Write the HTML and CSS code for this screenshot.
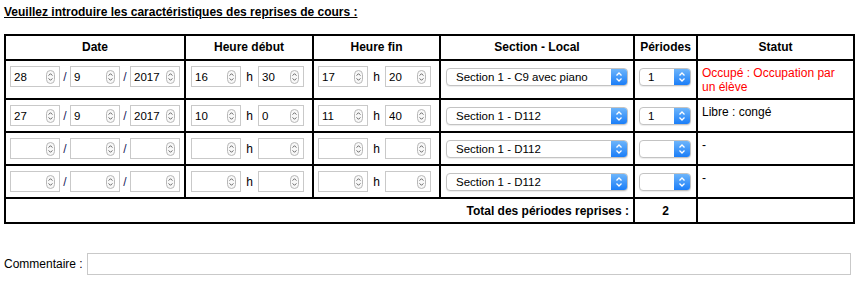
FILE: index.html
```html
<!DOCTYPE html>
<html lang="fr">
<head>
  <meta charset="UTF-8" />
  <title>Reprises de cours</title>
  <link rel="stylesheet" href="styles.css">
</head>
<body>
  <p class="title">Veuillez introduire les caractéristiques des reprises de cours :</p>

  <table class="reprises">
    <colgroup>
      <col class="c-date">
      <col class="c-debut">
      <col class="c-fin">
      <col class="c-local">
      <col class="c-periodes">
      <col class="c-statut">
    </colgroup>
    <tr>
      <th>Date</th>
      <th>Heure début</th>
      <th>Heure fin</th>
      <th>Section - Local</th>
      <th>Périodes</th>
      <th>Statut</th>
    </tr>

    <tr>
      <td>
        <div class="line">
          <span class="num"><input type="text" value="28"><svg class="spin" viewBox="0 0 9 14" width="9" height="14"><rect x="0.5" y="0.5" width="8" height="13" rx="4" fill="#f8f8f8" stroke="#b8b8b8"/><path d="M2.6 5.6L4.5 3.7 6.4 5.6M2.6 8.4L4.5 10.3 6.4 8.4" fill="none" stroke="#555" stroke-width="0.9"/></svg></span>
          <span class="sep">/</span>
          <span class="num"><input type="text" value="9"><svg class="spin" viewBox="0 0 9 14" width="9" height="14"><rect x="0.5" y="0.5" width="8" height="13" rx="4" fill="#f8f8f8" stroke="#b8b8b8"/><path d="M2.6 5.6L4.5 3.7 6.4 5.6M2.6 8.4L4.5 10.3 6.4 8.4" fill="none" stroke="#555" stroke-width="0.9"/></svg></span>
          <span class="sep">/</span>
          <span class="num"><input type="text" value="2017"><svg class="spin" viewBox="0 0 9 14" width="9" height="14"><rect x="0.5" y="0.5" width="8" height="13" rx="4" fill="#f8f8f8" stroke="#b8b8b8"/><path d="M2.6 5.6L4.5 3.7 6.4 5.6M2.6 8.4L4.5 10.3 6.4 8.4" fill="none" stroke="#555" stroke-width="0.9"/></svg></span>
        </div>
      </td>
      <td>
        <div class="line shift">
          <span class="num"><input type="text" value="16"><svg class="spin" viewBox="0 0 9 14" width="9" height="14"><rect x="0.5" y="0.5" width="8" height="13" rx="4" fill="#f8f8f8" stroke="#b8b8b8"/><path d="M2.6 5.6L4.5 3.7 6.4 5.6M2.6 8.4L4.5 10.3 6.4 8.4" fill="none" stroke="#555" stroke-width="0.9"/></svg></span>
          <span class="sep sep-h">h</span>
          <span class="num narrow"><input type="text" value="30"><svg class="spin" viewBox="0 0 9 14" width="9" height="14"><rect x="0.5" y="0.5" width="8" height="13" rx="4" fill="#f8f8f8" stroke="#b8b8b8"/><path d="M2.6 5.6L4.5 3.7 6.4 5.6M2.6 8.4L4.5 10.3 6.4 8.4" fill="none" stroke="#555" stroke-width="0.9"/></svg></span>
        </div>
      </td>
      <td>
        <div class="line">
          <span class="num"><input type="text" value="17"><svg class="spin" viewBox="0 0 9 14" width="9" height="14"><rect x="0.5" y="0.5" width="8" height="13" rx="4" fill="#f8f8f8" stroke="#b8b8b8"/><path d="M2.6 5.6L4.5 3.7 6.4 5.6M2.6 8.4L4.5 10.3 6.4 8.4" fill="none" stroke="#555" stroke-width="0.9"/></svg></span>
          <span class="sep sep-h">h</span>
          <span class="num narrow"><input type="text" value="20"><svg class="spin" viewBox="0 0 9 14" width="9" height="14"><rect x="0.5" y="0.5" width="8" height="13" rx="4" fill="#f8f8f8" stroke="#b8b8b8"/><path d="M2.6 5.6L4.5 3.7 6.4 5.6M2.6 8.4L4.5 10.3 6.4 8.4" fill="none" stroke="#555" stroke-width="0.9"/></svg></span>
        </div>
      </td>
      <td>
        <div class="line shift">
          <span class="select select-local"><select><option>Section 1 - C9 avec piano</option></select><span class="arrow"><svg viewBox="0 0 8 12" width="8" height="12"><path d="M1.5 4.5L4 2 6.5 4.5M1.5 7.5L4 10 6.5 7.5" fill="none" stroke="#fff" stroke-width="1.3"/></svg></span></span>
        </div>
      </td>
      <td>
        <div class="line">
          <span class="select select-per"><select><option>1</option></select><span class="arrow"><svg viewBox="0 0 8 12" width="8" height="12"><path d="M1.5 4.5L4 2 6.5 4.5M1.5 7.5L4 10 6.5 7.5" fill="none" stroke="#fff" stroke-width="1.3"/></svg></span></span>
        </div>
      </td>
      <td class="statut busy">Occupé : Occupation par un élève</td>
    </tr>

    <tr>
      <td>
        <div class="line">
          <span class="num"><input type="text" value="27"><svg class="spin" viewBox="0 0 9 14" width="9" height="14"><rect x="0.5" y="0.5" width="8" height="13" rx="4" fill="#f8f8f8" stroke="#b8b8b8"/><path d="M2.6 5.6L4.5 3.7 6.4 5.6M2.6 8.4L4.5 10.3 6.4 8.4" fill="none" stroke="#555" stroke-width="0.9"/></svg></span>
          <span class="sep">/</span>
          <span class="num"><input type="text" value="9"><svg class="spin" viewBox="0 0 9 14" width="9" height="14"><rect x="0.5" y="0.5" width="8" height="13" rx="4" fill="#f8f8f8" stroke="#b8b8b8"/><path d="M2.6 5.6L4.5 3.7 6.4 5.6M2.6 8.4L4.5 10.3 6.4 8.4" fill="none" stroke="#555" stroke-width="0.9"/></svg></span>
          <span class="sep">/</span>
          <span class="num"><input type="text" value="2017"><svg class="spin" viewBox="0 0 9 14" width="9" height="14"><rect x="0.5" y="0.5" width="8" height="13" rx="4" fill="#f8f8f8" stroke="#b8b8b8"/><path d="M2.6 5.6L4.5 3.7 6.4 5.6M2.6 8.4L4.5 10.3 6.4 8.4" fill="none" stroke="#555" stroke-width="0.9"/></svg></span>
        </div>
      </td>
      <td>
        <div class="line shift">
          <span class="num"><input type="text" value="10"><svg class="spin" viewBox="0 0 9 14" width="9" height="14"><rect x="0.5" y="0.5" width="8" height="13" rx="4" fill="#f8f8f8" stroke="#b8b8b8"/><path d="M2.6 5.6L4.5 3.7 6.4 5.6M2.6 8.4L4.5 10.3 6.4 8.4" fill="none" stroke="#555" stroke-width="0.9"/></svg></span>
          <span class="sep sep-h">h</span>
          <span class="num narrow"><input type="text" value="0"><svg class="spin" viewBox="0 0 9 14" width="9" height="14"><rect x="0.5" y="0.5" width="8" height="13" rx="4" fill="#f8f8f8" stroke="#b8b8b8"/><path d="M2.6 5.6L4.5 3.7 6.4 5.6M2.6 8.4L4.5 10.3 6.4 8.4" fill="none" stroke="#555" stroke-width="0.9"/></svg></span>
        </div>
      </td>
      <td>
        <div class="line">
          <span class="num"><input type="text" value="11"><svg class="spin" viewBox="0 0 9 14" width="9" height="14"><rect x="0.5" y="0.5" width="8" height="13" rx="4" fill="#f8f8f8" stroke="#b8b8b8"/><path d="M2.6 5.6L4.5 3.7 6.4 5.6M2.6 8.4L4.5 10.3 6.4 8.4" fill="none" stroke="#555" stroke-width="0.9"/></svg></span>
          <span class="sep sep-h">h</span>
          <span class="num narrow"><input type="text" value="40"><svg class="spin" viewBox="0 0 9 14" width="9" height="14"><rect x="0.5" y="0.5" width="8" height="13" rx="4" fill="#f8f8f8" stroke="#b8b8b8"/><path d="M2.6 5.6L4.5 3.7 6.4 5.6M2.6 8.4L4.5 10.3 6.4 8.4" fill="none" stroke="#555" stroke-width="0.9"/></svg></span>
        </div>
      </td>
      <td>
        <div class="line shift">
          <span class="select select-local"><select><option>Section 1 - D112</option></select><span class="arrow"><svg viewBox="0 0 8 12" width="8" height="12"><path d="M1.5 4.5L4 2 6.5 4.5M1.5 7.5L4 10 6.5 7.5" fill="none" stroke="#fff" stroke-width="1.3"/></svg></span></span>
        </div>
      </td>
      <td>
        <div class="line">
          <span class="select select-per"><select><option>1</option></select><span class="arrow"><svg viewBox="0 0 8 12" width="8" height="12"><path d="M1.5 4.5L4 2 6.5 4.5M1.5 7.5L4 10 6.5 7.5" fill="none" stroke="#fff" stroke-width="1.3"/></svg></span></span>
        </div>
      </td>
      <td class="statut">Libre : congé</td>
    </tr>

    <tr>
      <td>
        <div class="line">
          <span class="num"><input type="text"><svg class="spin" viewBox="0 0 9 14" width="9" height="14"><rect x="0.5" y="0.5" width="8" height="13" rx="4" fill="#f8f8f8" stroke="#b8b8b8"/><path d="M2.6 5.6L4.5 3.7 6.4 5.6M2.6 8.4L4.5 10.3 6.4 8.4" fill="none" stroke="#555" stroke-width="0.9"/></svg></span>
          <span class="sep">/</span>
          <span class="num"><input type="text"><svg class="spin" viewBox="0 0 9 14" width="9" height="14"><rect x="0.5" y="0.5" width="8" height="13" rx="4" fill="#f8f8f8" stroke="#b8b8b8"/><path d="M2.6 5.6L4.5 3.7 6.4 5.6M2.6 8.4L4.5 10.3 6.4 8.4" fill="none" stroke="#555" stroke-width="0.9"/></svg></span>
          <span class="sep">/</span>
          <span class="num"><input type="text"><svg class="spin" viewBox="0 0 9 14" width="9" height="14"><rect x="0.5" y="0.5" width="8" height="13" rx="4" fill="#f8f8f8" stroke="#b8b8b8"/><path d="M2.6 5.6L4.5 3.7 6.4 5.6M2.6 8.4L4.5 10.3 6.4 8.4" fill="none" stroke="#555" stroke-width="0.9"/></svg></span>
        </div>
      </td>
      <td>
        <div class="line shift">
          <span class="num"><input type="text"><svg class="spin" viewBox="0 0 9 14" width="9" height="14"><rect x="0.5" y="0.5" width="8" height="13" rx="4" fill="#f8f8f8" stroke="#b8b8b8"/><path d="M2.6 5.6L4.5 3.7 6.4 5.6M2.6 8.4L4.5 10.3 6.4 8.4" fill="none" stroke="#555" stroke-width="0.9"/></svg></span>
          <span class="sep sep-h">h</span>
          <span class="num narrow"><input type="text"><svg class="spin" viewBox="0 0 9 14" width="9" height="14"><rect x="0.5" y="0.5" width="8" height="13" rx="4" fill="#f8f8f8" stroke="#b8b8b8"/><path d="M2.6 5.6L4.5 3.7 6.4 5.6M2.6 8.4L4.5 10.3 6.4 8.4" fill="none" stroke="#555" stroke-width="0.9"/></svg></span>
        </div>
      </td>
      <td>
        <div class="line">
          <span class="num"><input type="text"><svg class="spin" viewBox="0 0 9 14" width="9" height="14"><rect x="0.5" y="0.5" width="8" height="13" rx="4" fill="#f8f8f8" stroke="#b8b8b8"/><path d="M2.6 5.6L4.5 3.7 6.4 5.6M2.6 8.4L4.5 10.3 6.4 8.4" fill="none" stroke="#555" stroke-width="0.9"/></svg></span>
          <span class="sep sep-h">h</span>
          <span class="num narrow"><input type="text"><svg class="spin" viewBox="0 0 9 14" width="9" height="14"><rect x="0.5" y="0.5" width="8" height="13" rx="4" fill="#f8f8f8" stroke="#b8b8b8"/><path d="M2.6 5.6L4.5 3.7 6.4 5.6M2.6 8.4L4.5 10.3 6.4 8.4" fill="none" stroke="#555" stroke-width="0.9"/></svg></span>
        </div>
      </td>
      <td>
        <div class="line shift">
          <span class="select select-local"><select><option>Section 1 - D112</option></select><span class="arrow"><svg viewBox="0 0 8 12" width="8" height="12"><path d="M1.5 4.5L4 2 6.5 4.5M1.5 7.5L4 10 6.5 7.5" fill="none" stroke="#fff" stroke-width="1.3"/></svg></span></span>
        </div>
      </td>
      <td>
        <div class="line">
          <span class="select select-per"><select><option></option></select><span class="arrow"><svg viewBox="0 0 8 12" width="8" height="12"><path d="M1.5 4.5L4 2 6.5 4.5M1.5 7.5L4 10 6.5 7.5" fill="none" stroke="#fff" stroke-width="1.3"/></svg></span></span>
        </div>
      </td>
      <td class="statut">-</td>
    </tr>

    <tr>
      <td>
        <div class="line">
          <span class="num"><input type="text"><svg class="spin" viewBox="0 0 9 14" width="9" height="14"><rect x="0.5" y="0.5" width="8" height="13" rx="4" fill="#f8f8f8" stroke="#b8b8b8"/><path d="M2.6 5.6L4.5 3.7 6.4 5.6M2.6 8.4L4.5 10.3 6.4 8.4" fill="none" stroke="#555" stroke-width="0.9"/></svg></span>
          <span class="sep">/</span>
          <span class="num"><input type="text"><svg class="spin" viewBox="0 0 9 14" width="9" height="14"><rect x="0.5" y="0.5" width="8" height="13" rx="4" fill="#f8f8f8" stroke="#b8b8b8"/><path d="M2.6 5.6L4.5 3.7 6.4 5.6M2.6 8.4L4.5 10.3 6.4 8.4" fill="none" stroke="#555" stroke-width="0.9"/></svg></span>
          <span class="sep">/</span>
          <span class="num"><input type="text"><svg class="spin" viewBox="0 0 9 14" width="9" height="14"><rect x="0.5" y="0.5" width="8" height="13" rx="4" fill="#f8f8f8" stroke="#b8b8b8"/><path d="M2.6 5.6L4.5 3.7 6.4 5.6M2.6 8.4L4.5 10.3 6.4 8.4" fill="none" stroke="#555" stroke-width="0.9"/></svg></span>
        </div>
      </td>
      <td>
        <div class="line shift">
          <span class="num"><input type="text"><svg class="spin" viewBox="0 0 9 14" width="9" height="14"><rect x="0.5" y="0.5" width="8" height="13" rx="4" fill="#f8f8f8" stroke="#b8b8b8"/><path d="M2.6 5.6L4.5 3.7 6.4 5.6M2.6 8.4L4.5 10.3 6.4 8.4" fill="none" stroke="#555" stroke-width="0.9"/></svg></span>
          <span class="sep sep-h">h</span>
          <span class="num narrow"><input type="text"><svg class="spin" viewBox="0 0 9 14" width="9" height="14"><rect x="0.5" y="0.5" width="8" height="13" rx="4" fill="#f8f8f8" stroke="#b8b8b8"/><path d="M2.6 5.6L4.5 3.7 6.4 5.6M2.6 8.4L4.5 10.3 6.4 8.4" fill="none" stroke="#555" stroke-width="0.9"/></svg></span>
        </div>
      </td>
      <td>
        <div class="line">
          <span class="num"><input type="text"><svg class="spin" viewBox="0 0 9 14" width="9" height="14"><rect x="0.5" y="0.5" width="8" height="13" rx="4" fill="#f8f8f8" stroke="#b8b8b8"/><path d="M2.6 5.6L4.5 3.7 6.4 5.6M2.6 8.4L4.5 10.3 6.4 8.4" fill="none" stroke="#555" stroke-width="0.9"/></svg></span>
          <span class="sep sep-h">h</span>
          <span class="num narrow"><input type="text"><svg class="spin" viewBox="0 0 9 14" width="9" height="14"><rect x="0.5" y="0.5" width="8" height="13" rx="4" fill="#f8f8f8" stroke="#b8b8b8"/><path d="M2.6 5.6L4.5 3.7 6.4 5.6M2.6 8.4L4.5 10.3 6.4 8.4" fill="none" stroke="#555" stroke-width="0.9"/></svg></span>
        </div>
      </td>
      <td>
        <div class="line shift">
          <span class="select select-local"><select><option>Section 1 - D112</option></select><span class="arrow"><svg viewBox="0 0 8 12" width="8" height="12"><path d="M1.5 4.5L4 2 6.5 4.5M1.5 7.5L4 10 6.5 7.5" fill="none" stroke="#fff" stroke-width="1.3"/></svg></span></span>
        </div>
      </td>
      <td>
        <div class="line">
          <span class="select select-per"><select><option></option></select><span class="arrow"><svg viewBox="0 0 8 12" width="8" height="12"><path d="M1.5 4.5L4 2 6.5 4.5M1.5 7.5L4 10 6.5 7.5" fill="none" stroke="#fff" stroke-width="1.3"/></svg></span></span>
        </div>
      </td>
      <td class="statut">-</td>
    </tr>

    <tr class="total">
      <td colspan="4" class="total-label">Total des périodes reprises :</td>
      <td class="total-value">2</td>
      <td></td>
    </tr>
  </table>

  <div class="comment">
    <label for="commentaire">Commentaire :</label>
    <input type="text" id="commentaire">
  </div>
</body>
</html>
```

FILE: styles.css
```css
body {
  margin: 0;
  padding: 5px 0 0 4px;
  font-family: "Liberation Sans", Arial, sans-serif;
  font-size: 12px;
  color: #000;
  background: #fff;
}

.title {
  margin: 0;
  line-height: 14px;
  font-weight: bold;
  text-decoration: underline;
}

.reprises {
  margin-top: 15px;
  width: 851px;
  table-layout: fixed;
  border-collapse: separate;
  border-spacing: 0;
  border: 1px solid #000;
}

.c-date { width: 180px; }
.c-debut { width: 128px; }
.c-fin { width: 127px; }
.c-local { width: 194px; }
.c-periodes { width: 63px; }
.c-statut { width: 157px; }

.reprises th,
.reprises td {
  border: 1px solid #000;
  line-height: 14px;
}

.reprises th {
  padding: 4px 4px 5px;
  font-weight: bold;
  text-align: center;
}

.reprises td {
  padding: 5px 4px;
  vertical-align: top;
  text-align: left;
}

.reprises td.busy {
  padding-bottom: 4px;
}

.reprises .total td {
  padding: 5px 4px 4px;
}

.line {
  display: flex;
  align-items: center;
  height: 21px;
}

.line.shift {
  padding-left: 1px;
}

.num {
  display: inline-flex;
  align-items: center;
  box-sizing: border-box;
  width: 50px;
  height: 21px;
  border: 1px solid #c9c9c9;
  background: #fff;
}

.num.narrow {
  width: 46px;
}

.num input {
  flex: 1;
  min-width: 0;
  border: 0;
  padding: 0 0 0 3px;
  margin: 0;
  background: transparent;
  font-family: "Liberation Sans", Arial, sans-serif;
  font-size: 11.5px;
  color: #000;
  outline: none;
}

.spin {
  flex: none;
  margin-right: 4px;
}

.sep {
  display: inline-block;
  width: 10px;
  text-align: center;
  color: #1a1a5a;
}

.sep-h {
  width: 17px;
  color: #000;
}

.select {
  display: inline-flex;
  box-sizing: border-box;
  height: 18px;
  border: 1px solid #c3c3c3;
  border-radius: 4px;
  background: #fff;
  box-shadow: 0 1px 1px rgba(0, 0, 0, 0.08);
  overflow: hidden;
}

.select select {
  flex: 1;
  min-width: 0;
  -webkit-appearance: none;
  appearance: none;
  border: 0;
  margin: 0;
  padding: 0 0 0 9px;
  background: transparent;
  font-family: "Liberation Sans", Arial, sans-serif;
  font-size: 11.5px;
  color: #000;
  outline: none;
}

.select .arrow {
  flex: none;
  display: flex;
  align-items: center;
  justify-content: center;
  width: 16px;
  background: linear-gradient(#6db5fb, #1b7ef8);
}

.select-local {
  width: 182px;
}

.select-per {
  width: 52px;
}

.select-per select {
  padding-left: 8px;
}

.statut {
  line-height: 14px;
}

.busy {
  color: #f00;
}

.total td {
  font-weight: bold;
}

.total-label {
  text-align: right !important;
}

.total-value {
  text-align: center !important;
}

.comment {
  display: flex;
  align-items: center;
  margin-top: 29px;
}

.comment input {
  box-sizing: border-box;
  width: 764px;
  height: 22px;
  margin: 0 0 0 4px;
  border: 1px solid #c9c9c9;
  padding: 0 3px;
  font-family: "Liberation Sans", Arial, sans-serif;
  font-size: 12px;
  outline: none;
}
```
